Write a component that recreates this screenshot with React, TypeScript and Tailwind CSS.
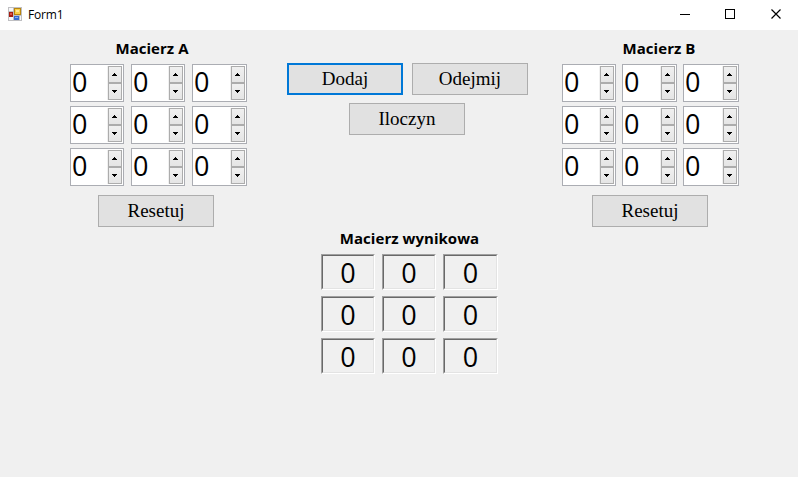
type SpinnerProps = { width: string };

function Arrow({ down = false }: { down?: boolean }) {
  return (
    <span className="flex h-[17px] w-full items-center justify-start border border-[#acacac] bg-linear-to-b from-[#f0f0f0] to-[#e5e5e5] pl-[3px]">
      <svg width="5" height="3" viewBox="0 0 5 3" shapeRendering="crispEdges">
        <path d={down ? 'M0 0h5v1H4v1H3v1H2V2H1V1H0z' : 'M2 0h1v1h1v1h1v1H0V2h1V1h1z'} />
      </svg>
    </span>
  );
}

function Spinner({ width }: SpinnerProps) {
  return (
    <div className={`flex h-[38px] justify-between border border-[#abadb3] bg-white p-px ${width}`}>
      <span className="font-['Open_Sans',sans-serif] text-[27px] leading-[32px]">0</span>
      <span className="flex w-[15px] flex-col border-l border-[#f0f0f0]">
        <Arrow />
        <Arrow down />
      </span>
    </div>
  );
}

function Matrix({ widths, gap }: { widths: string[]; gap: string }) {
  return (
    <div className="flex flex-col gap-1">
      {[0, 1, 2].map((row) => (
        <div key={row} className={`flex ${gap}`}>
          {widths.map((w, col) => (
            <Spinner key={col} width={w} />
          ))}
        </div>
      ))}
    </div>
  );
}

function FormButton({ label, focused = false }: { label: string; focused?: boolean }) {
  return (
    <button
      className={`flex h-8 w-[116px] shrink-0 items-center justify-center bg-[#e1e1e1] pb-0.5 font-['Liberation_Serif',serif] text-[19px] leading-none ${
        focused ? 'border-2 border-[#0078d7]' : 'border border-[#adadad]'
      }`}
    >
      {label}
    </button>
  );
}

function Heading({ children }: { children: string }) {
  return (
    <h2 className="h-5 whitespace-nowrap text-center font-['Open_Sans',sans-serif] text-[15px] leading-5 font-bold tracking-[0.04px]">
      {children}
    </h2>
  );
}

function ResultCell({ width }: { width: string }) {
  return (
    <div className={`h-9 border border-t-[#a0a0a0] border-r-white border-b-white border-l-[#a0a0a0] ${width}`}>
      <div className="h-full border border-t-[#696969] border-r-[#e3e3e3] border-b-[#e3e3e3] border-l-[#696969] pt-px text-center font-['Open_Sans',sans-serif] text-[27px] leading-[32px]">
        0
      </div>
    </div>
  );
}

function AppIcon() {
  return (
    <svg width="14" height="14" viewBox="0 0 14 14" shapeRendering="crispEdges">
      <path d="M0 0h14v14H0z" fill="#bfbfc2" />
      <path d="M1 1h4v3H1zM1 10h4v3H1zM12 9h1v4h-1z" fill="#f6f6f8" />
      <path d="M1 5h4v5H1z" fill="#a51d12" />
      <path d="M2 6h2v2H2z" fill="#dd5546" />
      <path d="M6 1h7v7H6z" fill="#b8860f" />
      <path d="M7 2h5v5H7z" fill="#f9cf48" />
      <path d="M8 3h3v2H8z" fill="#ffe795" />
      <path d="M6 9h5v4H6z" fill="#356bd0" />
      <path d="M7 10h3v1H7z" fill="#82adf4" />
    </svg>
  );
}

export default function App() {
  return (
    <div className="flex h-[477px] w-[798px] flex-col overflow-hidden bg-[#f0f0f0] text-black">
      <header className="flex h-[30px] shrink-0 items-center bg-white pl-2">
        <span className="flex pb-0.5">
          <AppIcon />
        </span>
        <span className="ml-1.5 font-['Open_Sans',sans-serif] text-[12px] leading-4 tracking-[-0.2px]">Form1</span>
        <div className="ml-auto flex h-full items-center pr-4 pb-0.5">
          <svg width="102" height="10" viewBox="0 0 102 10" fill="none" stroke="black">
            <path d="M0 5.5h10M45.5.5h9v9h-9z" shapeRendering="crispEdges" />
            <path d="M91.5.5l9 9M100.5.5l-9 9" strokeWidth="1.2" />
          </svg>
        </div>
      </header>
      <main className="flex items-start pl-[70px]">
        <section className="flex w-[177px] flex-col pt-2">
          <div className="pr-[13px]">
            <Heading>Macierz A</Heading>
          </div>
          <div className="pt-1.5">
            <Matrix widths={['w-[54px]', 'w-[54px]', 'w-[55px]']} gap="gap-[7px]" />
          </div>
          <div className="pt-[9px] pl-7">
            <FormButton label="Resetuj" />
          </div>
        </section>
        <section className="ml-10 flex w-[241px] flex-col pt-[33px]">
          <div className="flex gap-[9px]">
            <FormButton label="Dodaj" focused />
            <FormButton label="Odejmij" />
          </div>
          <div className="pt-2 pl-[62px]">
            <FormButton label="Iloczyn" />
          </div>
          <div className="flex flex-col pt-[93px] pl-[34px]">
            <div className="w-[177px]">
              <Heading>Macierz wynikowa</Heading>
            </div>
            <div className="flex flex-col gap-1.5 pt-1.5">
              {[0, 1, 2].map((row) => (
                <div key={row} className="flex gap-[7px]">
                  <ResultCell width="w-[54px]" />
                  <ResultCell width="w-[54px]" />
                  <ResultCell width="w-[55px]" />
                </div>
              ))}
            </div>
          </div>
        </section>
        <section className="ml-[34px] flex w-[177px] flex-col pt-2">
          <div className="pl-[17px]">
            <Heading>Macierz B</Heading>
          </div>
          <div className="pt-1.5">
            <Matrix widths={['w-[54px]', 'w-[55px]', 'w-[56px]']} gap="gap-1.5" />
          </div>
          <div className="pt-[9px] pl-[30px]">
            <FormButton label="Resetuj" />
          </div>
        </section>
      </main>
    </div>
  );
}
